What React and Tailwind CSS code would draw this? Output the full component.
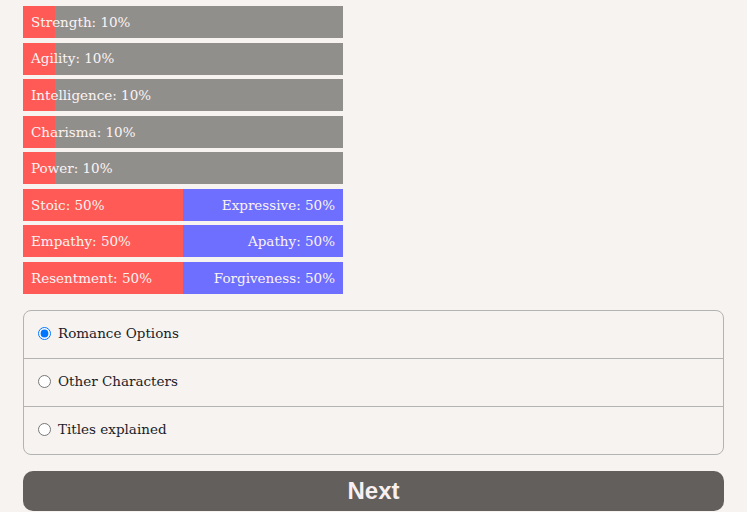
import { useState } from "react";

const singles = ["Strength", "Agility", "Intelligence", "Charisma", "Power"];

const pairs = [
    ["Stoic", "Expressive"],
    ["Empathy", "Apathy"],
    ["Resentment", "Forgiveness"],
];

const options = ["Romance Options", "Other Characters", "Titles explained"];

const serif = { fontFamily: '"DejaVu Serif", "Liberation Serif", serif' };

export default function App() {
    const [choice, setChoice] = useState(options[0]);

    return (
        <div className="min-h-screen w-full bg-[#f6f3f0] pt-[6px] px-[23px]">
            <div className="w-[320px] flex flex-col gap-[4.57px]" style={serif}>
                {singles.map((name) => (
                    <div key={name} className="relative h-[32px] bg-[#918f8c]">
                        <div className="absolute left-0 top-0 h-full bg-[#ff5a55]" style={{ width: "10%" }} />
                        <span className="relative flex h-full items-center pl-[8px] text-[13.5px] text-[#fbf4f4]">
                            {name}: 10%
                        </span>
                    </div>
                ))}
                {pairs.map(([left, right]) => (
                    <div key={left} className="flex h-[32px] text-[13.5px] text-[#fbf4f4]">
                        <div className="flex w-1/2 items-center bg-[#ff5a55] pl-[8px]">{left}: 50%</div>
                        <div className="flex w-1/2 items-center justify-end bg-[#6e6eff] pr-[8px]">{right}: 50%</div>
                    </div>
                ))}
            </div>

            <div className="mt-[16px] w-[701px] rounded-[8px] border border-[#b3b3b3]" style={serif}>
                {options.map((opt, i) => (
                    <label
                        key={opt}
                        className={
                            "flex items-center gap-[7px] pl-[14px] pb-[2px] text-[13.5px] text-[#1c1c28] " +
                            (i > 0 ? "h-[48px] border-t border-[#b3b3b3]" : "h-[47px]")
                        }
                    >
                        <input
                            type="radio"
                            name="info"
                            checked={choice === opt}
                            onChange={() => setChoice(opt)}
                            className="m-0 h-[13px] w-[13px] accent-[#0075ff]"
                        />
                        {opt}
                    </label>
                ))}
            </div>

            <button
                className="mt-[16px] flex h-[40px] w-[701px] items-center justify-center rounded-[10px] bg-[#625f5c] text-[24px] font-bold text-[#f8f0f0]"
                style={{ fontFamily: '"Liberation Sans", Arial, sans-serif' }}
            >
                Next
            </button>
        </div>
    );
}
